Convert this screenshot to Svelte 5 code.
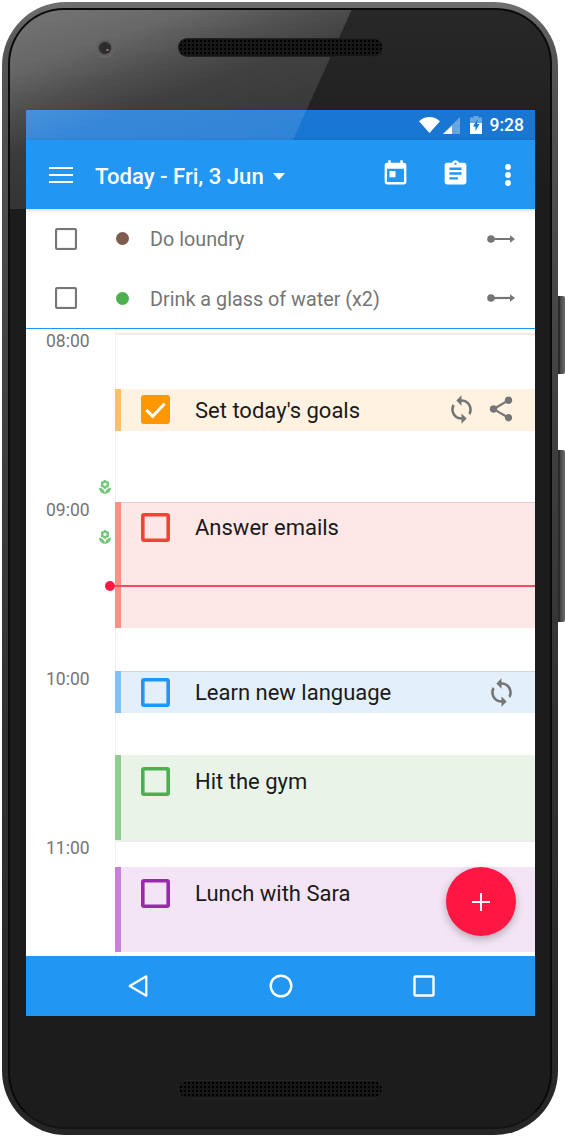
<script>
  const backlog = [
    { label: 'Do loundry', color: '#7f5b4e' },
    { label: 'Drink a glass of water (x2)', color: '#4caf50' }
  ];
  const hours = ['08:00', '09:00', '10:00', '11:00'];
  const tasks = [
    { label: "Set today's goals", gap: 60, h: 42, pad: 6, nudge: 1, bg: '#fff2e0', bar: '#ffbf66', c: '#ff9800', done: true, sync: true, share: true },
    { label: 'Answer emails', gap: 71, h: 126, pad: 11, nudge: 0, bg: '#fde7e7', bar: '#fd8f87', c: '#f44336', ruled: true },
    { label: 'Learn new language', gap: 43, h: 42, pad: 7, nudge: 0, bg: '#e3f0fb', bar: '#83c0f5', c: '#2196f3', sync: true, ruled: true },
    { label: 'Hit the gym', gap: 42, h: 85, pad: 12, nudge: 0, bg: '#e9f3e8', bar: '#8fcd92', c: '#4caf50' },
    { label: 'Lunch with Sara', gap: 27, h: 85, pad: 12, nudge: 0, bg: '#f3e5f5', bar: '#c880d8', c: '#9c27b0' }
  ];
  const sync = 'M12 4V1L8 5l4 4V6c3.31 0 6 2.69 6 6 0 1.01-.25 1.97-.7 2.8l1.46 1.46C19.54 15.03 20 13.57 20 12c0-4.42-3.58-8-8-8zm0 14c-3.31 0-6-2.69-6-6 0-1.01.25-1.97.7-2.8L5.24 7.74C4.46 8.97 4 10.43 4 12c0 4.42 3.58 8 8 8v3l4-4-4-4v3z';
  const share = 'M18 16.08c-.76 0-1.44.3-1.96.77L8.91 12.7c.05-.23.09-.46.09-.7s-.04-.47-.09-.7l7.05-4.11c.54.5 1.25.81 2.04.81 1.66 0 3-1.34 3-3s-1.34-3-3-3-3 1.34-3 3c0 .24.04.47.09.7L8.04 9.81C7.5 9.31 6.79 9 6 9c-1.66 0-3 1.34-3 3s1.34 3 3 3c.79 0 1.5-.31 2.04-.81l7.12 4.16c-.05.21-.08.43-.08.65 0 1.61 1.31 2.92 2.92 2.92 1.61 0 2.92-1.31 2.92-2.92s-1.31-2.92-2.92-2.92z';
  const flower = 'M12 22c4.97 0 9-4.03 9-9-4.97 0-9 4.03-9 9zM5.6 10.25c0 1.38 1.12 2.5 2.5 2.5.53 0 1.01-.16 1.42-.44l-.02.19c0 1.38 1.12 2.5 2.5 2.5s2.5-1.12 2.5-2.5l-.02-.19c.4.28.89.44 1.42.44 1.38 0 2.5-1.12 2.5-2.5 0-1-.59-1.85-1.43-2.25.84-.4 1.43-1.25 1.43-2.25 0-1.38-1.12-2.5-2.5-2.5-.53 0-1.01.16-1.42.44l.02-.19C14.5 2.12 13.38 1 12 1S9.5 2.12 9.5 3.5l.02.19c-.4-.28-.89-.44-1.42-.44-1.38 0-2.5 1.12-2.5 2.5 0 1 .59 1.85 1.43 2.25-.84.4-1.43 1.25-1.43 2.25zM12 5.5c1.38 0 2.5 1.12 2.5 2.5s-1.12 2.5-2.5 2.5S9.5 9.38 9.5 8s1.12-2.5 2.5-2.5zM3 13c0 4.97 4.03 9 9 9 0-4.97-4.03-9-9-9z';
</script>

<div class="device">
  <span class="key key-power"></span>
  <span class="key key-volume"></span>
  <div class="rim">
    <div class="bezel">
      <div class="earpiece">
        <span class="camera"></span>
        <span class="speaker"></span>
      </div>

      <div class="screen">
        <div class="status">
          <svg class="st-wifi" viewBox="0 0 21 16"><path d="M0 4.2C3 1.6 6.6 0 10.5 0S18 1.6 21 4.2L10.5 16z" fill="#fff"/></svg>
          <svg class="st-signal" viewBox="0 0 17 17"><path d="M17 0v17H0z" fill="#fff" opacity=".35"/><path d="M9 8.5V17H0z" fill="#fff"/></svg>
          <svg class="st-batt" viewBox="0 0 12 18"><path d="M3.5 0h5v1.5H12V7H0V1.5h3.500z" fill="#fff" opacity=".35"/><path d="M0 7h12v11H0z" fill="#fff"/><path d="M7.500 3 3 10.500h2.500V15L9.500 8H7z" fill="#1976d2"/></svg>
          <span class="clock">9:28</span>
        </div>

        <header class="bar">
          <svg class="menu" viewBox="0 0 24 16"><path d="M0 1h24M0 8h24M0 15h24" stroke="#fff" stroke-width="2.200"/></svg>
          <h1>Today - Fri, 3 Jun</h1>
          <svg class="caret" viewBox="0 0 12 7"><path d="M0 0h12L6 7z" fill="#fff"/></svg>
          <svg class="act act-cal" viewBox="0 0 24 24"><path fill="#fff" d="M19 3h-1V1h-2v2H8V1H6v2H5c-1.100 0-2 .9-2 2v14c0 1.100.9 2 2 2h14c1.100 0 2-.9 2-2V5c0-1.100-.9-2-2-2zm0 16H5V8h14v11zM7 10h5v5H7z"/></svg>
          <svg class="act act-clip" viewBox="0 0 24 24"><path fill="#fff" d="M19 3h-4.180C14.400 1.840 13.300 1 12 1c-1.300 0-2.400.84-2.820 2H5c-1.100 0-2 .9-2 2v14c0 1.100.9 2 2 2h14c1.100 0 2-.9 2-2V5c0-1.100-.9-2-2-2zm-7 0c.55 0 1 .45 1 1s-.45 1-1 1-1-.45-1-1 .45-1 1-1zm2 14H7v-2h7v2zm3-4H7v-2h10v2zm0-4H7V7h10v2z"/></svg>
          <svg class="act-more" viewBox="0 0 6 22"><circle cx="3" cy="3" r="2.900" fill="#fff"/><circle cx="3" cy="11" r="2.900" fill="#fff"/><circle cx="3" cy="19" r="2.900" fill="#fff"/></svg>
        </header>

        <ul class="backlog">
          {#each backlog as item}
            <li>
              <span class="plain-box"></span>
              <span class="dot" style="background:{item.color}"></span>
              <span class="b-label">{item.label}</span>
              <svg class="arrow" viewBox="0 0 28 12"><circle cx="4" cy="6" r="3.800" fill="#757575"/><path d="M4 6h21" stroke="#757575" stroke-width="2.200"/><path d="M23 2.200l5 3.800-5 3.800z" fill="#757575"/></svg>
            </li>
          {/each}
        </ul>

        <section class="timeline">
          <div class="times">
            {#each hours as h}
              <div class="hour"><span>{h}</span></div>
            {/each}
          </div>
          <div class="lane">
            <div class="rules">
              {#each hours as h}
                <div class="rule"></div>
              {/each}
            </div>
            {#each tasks as t}
              <article class="task" class:ruled={t.ruled} style="margin-top:{t.gap}px;height:{t.h}px;padding-top:{t.pad}px;background:{t.bg};border-left-color:{t.bar}">
                <span class="box" style="color:{t.c};background:{t.done ? t.c : 'transparent'}">
                  {#if t.done}
                    <svg viewBox="0 0 24 24"><path d="M2.500 12.500l6.500 6.500L21.500 6" fill="none" stroke="#fff" stroke-width="3.200"/></svg>
                  {/if}
                </span>
                <span class="t-label" style="margin-top:{t.nudge}px">{t.label}</span>
                {#if t.sync}
                  <svg class="t-icon" class:t-last={!t.share} viewBox="0 0 24 24"><path fill="#757575" d={sync}/></svg>
                {/if}
                {#if t.share}
                  <svg class="t-icon t-share" viewBox="0 0 24 24"><path fill="#757575" d={share}/></svg>
                {/if}
              </article>
            {/each}
          </div>

          <svg class="flower flower-a" viewBox="0 0 24 24"><path fill="#74c77a" d={flower}/></svg>
          <svg class="flower flower-b" viewBox="0 0 24 24"><path fill="#74c77a" d={flower}/></svg>
          <div class="now"></div>
        </section>

        <button class="fab" aria-label="Add">
          <svg viewBox="0 0 18 18"><path d="M9 0v18M0 9h18" stroke="#fff" stroke-width="2"/></svg>
        </button>

        <nav class="nav">
          <svg viewBox="0 0 24 26"><path d="M21 2.500v21L3 13z" fill="none" stroke="#fff" stroke-width="2.400" stroke-linejoin="round"/></svg>
          <svg viewBox="0 0 24 24"><circle cx="12" cy="12" r="10.300" fill="none" stroke="#fff" stroke-width="2.400"/></svg>
          <svg viewBox="0 0 24 24"><rect x="2.500" y="2.500" width="19" height="19" rx="1" fill="none" stroke="#fff" stroke-width="2.400"/></svg>
        </nav>
      </div>

      <div class="earpiece earpiece-bottom">
        <span class="speaker"></span>
      </div>

      <div class="glare"></div>
    </div>
  </div>
</div>

<style>
  :global(body) {
    margin: 0;
    background: #fff;
    font-family: Roboto, "Liberation Sans", sans-serif;
  }
  .device {
    position: relative;
    width: 556px;
    height: 1133px;
    margin: 2px 0 0 2px;
  }
  .key {
    position: absolute;
    left: 552px;
    width: 11px;
    border-radius: 0 2px 2px 0;
    background: linear-gradient(90deg, #2a2a2a 0, #2a2a2a 50%, #4a4a4a 60%, #6a6a6a 100%);
  }
  .key-power { top: 294px; height: 78px; }
  .key-volume { top: 448px; height: 172px; }
  .rim {
    position: relative;
    box-sizing: border-box;
    height: 100%;
    padding: 6px;
    border-radius: 64px;
    background: linear-gradient(180deg, #707070 0, #565656 4%, #444 30%, #333 60%, #2a2a2a 90%, #262626 100%);
  }
  .bezel {
    position: relative;
    overflow: hidden;
    box-sizing: border-box;
    height: 100%;
    border: 2px solid;
    border-color: #0a0a0a #0a0a0a #141414 #0a0a0a;
    border-radius: 56px;
    background: linear-gradient(180deg, #282828 0, #1c1c1c 16%);
    padding: 0 16px;
  }
  .earpiece {
    position: relative;
    z-index: 2;
    display: flex;
    justify-content: center;
    align-items: flex-start;
    height: 71px;
    padding-top: 29px;
  }
  .earpiece-bottom { height: 47px; padding-top: 65px; }
  .speaker {
    display: block;
    width: 203px;
    height: 17px;
    border-radius: 8px;
    background-color: #171717;
    background-image: radial-gradient(circle, #000 0.9px, transparent 1.3px);
    background-size: 4px 4px;
    box-shadow: 0 0 0 1px #222;
  }
  .camera {
    position: absolute;
    left: 69px;
    top: 28px;
    width: 20px;
    height: 20px;
    border-radius: 50%;
    background:
      radial-gradient(circle at 62% 60%, #b0707c 0, #b0707c 0.8px, transparent 1.4px),
      radial-gradient(circle, #2a2a2a 0, #2e2e2e 5.500px, #585858 6.500px, #666 9px, #5c5c5c 100%);
  }
  .screen {
    position: relative;
    display: flex;
    flex-direction: column;
    width: 509px;
    height: 906px;
    overflow: hidden;
    background: #fff;
  }
  .status {
    display: flex;
    align-items: center;
    flex: none;
    height: 30px;
    padding-right: 11px;
    background: #1976d2;
  }
  .st-wifi { width: 21px; height: 16px; margin-left: auto; }
  .st-signal { width: 17px; height: 17px; margin-left: 3px; }
  .st-batt { width: 12px; height: 18px; margin-left: 10px; }
  .clock {
    margin-left: 8px;
    color: #fff;
    font-size: 17.500px;
    font-weight: 500;
    line-height: 30px;
  }
  .bar {
    position: relative;
    z-index: 2;
    display: flex;
    align-items: center;
    flex: none;
    height: 69px;
    padding-left: 23px;
    background: #2196f3;
    box-shadow: 0 1px 4px rgba(0, 0, 0, 0.2);
  }
  .menu { width: 24px; height: 16px; }
  h1 {
    margin: 3px 0 0 22px;
    color: #fff;
    font-size: 22.100px;
    font-weight: 500;
    white-space: nowrap;
  }
  .caret { width: 12px; height: 7px; margin: 3px 0 0 9px; }
  .act { width: 29px; height: 29px; margin-top: -3px; }
  .act-cal { margin-left: 96px; }
  .act-clip { margin-left: 31px; }
  .act-more { width: 6px; height: 22px; margin-left: 35px; }
  .backlog {
    flex: none;
    height: 119px;
    margin: 0;
    padding: 0;
    list-style: none;
    border-bottom: 1px solid #2196f3;
  }
  .backlog li {
    display: flex;
    align-items: center;
    height: 59.500px;
    padding-left: 29px;
    padding-right: 20px;
  }
  .plain-box {
    box-sizing: border-box;
    width: 22px;
    height: 22px;
    border: 2.500px solid #767676;
    border-radius: 2px;
    box-shadow: inset 0 0 1px #767676;
  }
  .dot {
    width: 13px;
    height: 13px;
    margin-left: 39px;
    border-radius: 50%;
  }
  .b-label {
    flex: 1;
    margin: 2px 0 0 21px;
    color: #757575;
    font-size: 19.800px;
  }
  .arrow { width: 28px; height: 12px; }
  .timeline {
    position: relative;
    flex: 1;
    display: flex;
    min-height: 0;
    overflow: hidden;
  }
  .times { flex: none; width: 89px; }
  .hour {
    display: flex;
    align-items: center;
    justify-content: flex-start;
    height: 169px;
    padding-left: 20px;
    box-sizing: border-box;
  }
  .hour span {
    margin-bottom: 145px;
    color: #757575;
    font-size: 17.500px;
    line-height: 24px;
  }
  .lane {
    position: relative;
    flex: 1;
    border-left: 1px solid #f1f1f1;
  }
  .rules { position: absolute; inset: 4px 0 0 0; }
  .rule {
    box-sizing: border-box;
    height: 169px;
    border-top: 2px solid #ececec;
  }
  .task {
    position: relative;
    display: flex;
    align-items: flex-start;
    box-sizing: border-box;
    margin-left: -1px;
    border-left: 6px solid;
    padding-left: 20px;
  }
  .task.ruled { box-shadow: inset 0 1px 0 rgba(0, 0, 0, 0.1); }
  .box {
    box-sizing: border-box;
    flex: none;
    display: block;
    width: 29px;
    height: 29px;
    border: 3px solid currentColor;
    border-radius: 3px;
    box-shadow: inset 0 0 0 0.6px currentColor;
  }
  .box svg { display: block; width: 23px; height: 23px; }
  .t-label {
    flex: 1;
    margin-left: 25px;
    color: #1a1a1a;
    font-size: 22px;
    line-height: 29px;
  }
  .t-icon { width: 31px; height: 31px; margin-top: -1px; }
  .t-share { width: 30px; height: 30px; margin: -1px 19px 0 9px; }
  .t-last { margin-right: 18px; }
  .flower {
    position: absolute;
    left: 71px;
    width: 16px;
    height: 16px;
  }
  .flower-a { top: 150px; }
  .flower-b { top: 200px; }
  .now {
    position: absolute;
    left: 89px;
    right: 0;
    top: 256px;
    height: 2px;
    background: #f34a68;
  }
  .now::before {
    content: '';
    position: absolute;
    left: -10px;
    top: -4.500px;
    width: 10px;
    height: 10px;
    border-radius: 50%;
    background: #ff1744;
  }
  .fab {
    position: absolute;
    right: 19px;
    top: 757px;
    z-index: 3;
    display: grid;
    place-items: center;
    width: 70px;
    height: 69px;
    padding: 0;
    border: 0;
    border-radius: 50%;
    background: #ff1744;
    box-shadow: 0 3px 8px rgba(0, 0, 0, 0.28);
  }
  .fab svg { width: 18px; height: 18px; }
  .nav {
    flex: none;
    position: relative;
    z-index: 2;
    display: flex;
    justify-content: center;
    align-items: center;
    gap: 119px;
    height: 60px;
    background: #2196f3;
  }
  .nav svg { width: 24px; height: 24px; }
  .glare {
    position: absolute;
    z-index: 1;
    left: -1px;
    top: -1px;
    width: 343px;
    height: 200px;
    pointer-events: none;
    background: linear-gradient(160deg, rgba(255, 255, 255, 0.36) 0, rgba(255, 255, 255, 0.3) 20%, rgba(255, 255, 255, 0.2) 33%, rgba(255, 255, 255, 0.13) 45%, rgba(255, 255, 255, 0.1) 70%, rgba(255, 255, 255, 0.07) 100%);
    clip-path: polygon(100% 0, 253px 100%, 0 100%, 0 0);
  }
</style>
